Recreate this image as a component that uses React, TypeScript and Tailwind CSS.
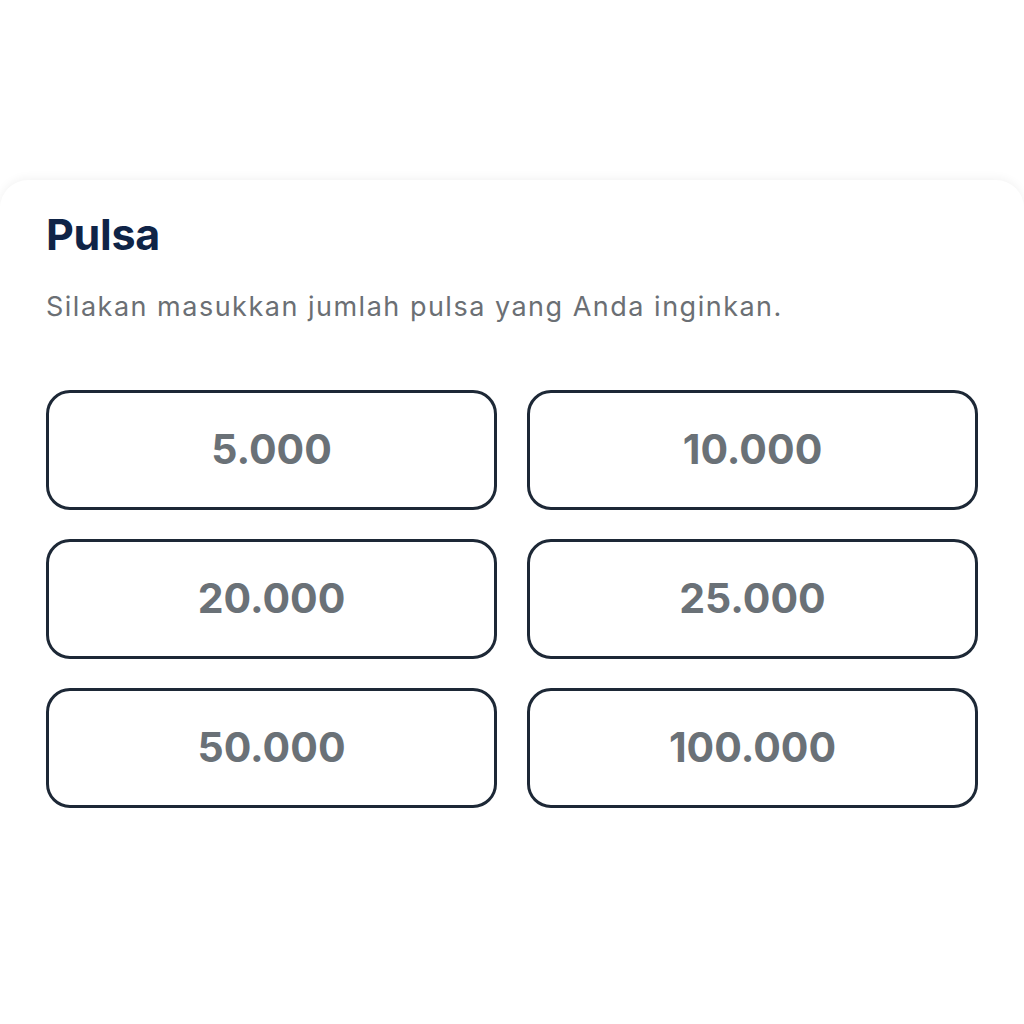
const amounts = ["5.000", "10.000", "20.000", "25.000", "50.000", "100.000"];

export default function App() {
  return (
    <div className="min-h-screen w-full bg-white pt-[180px]" style={{ fontFamily: "Inter, 'Open Sans', sans-serif" }}>
      <div className="min-h-[844px] rounded-t-[28px] bg-white px-[46px] pt-[28px] shadow-[0_-2px_10px_rgba(0,0,0,0.05)]">
        <h1 className="text-[43px] font-bold leading-[52px] tracking-[-0.3px] text-[#0f2447]">Pulsa</h1>
        <p className="mt-[30px] text-[27px] leading-[34px] tracking-[1.5px] text-[#6b6f74]">
          Silakan masukkan jumlah pulsa yang Anda inginkan.
        </p>
        <div className="mt-[66px] grid grid-cols-2 gap-x-[30px] gap-y-[29px]">
          {amounts.map((a) => (
            <button
              key={a}
              type="button"
              className="flex h-[120px] items-center justify-center rounded-[24px] border-[3px] border-[#1d2836] bg-white text-[41px] font-bold text-[#6a7177]"
            >
              {a}
            </button>
          ))}
        </div>
      </div>
    </div>
  );
}
